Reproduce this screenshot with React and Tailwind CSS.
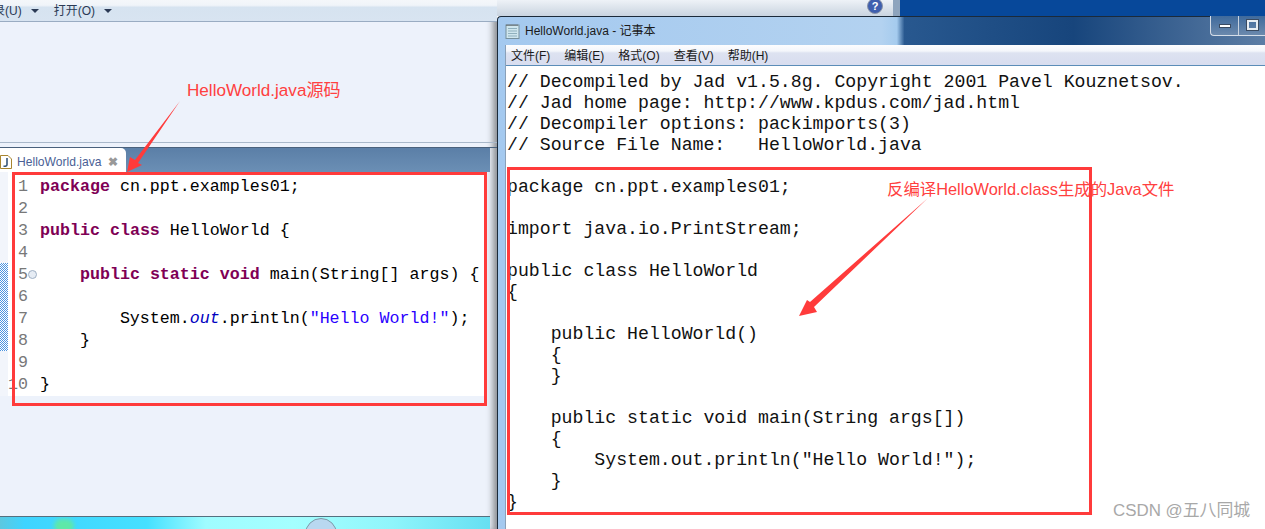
import React from "react";

const editorLines = [
  [["k", "package"], ["t", " cn.ppt.examples01;"]],
  [],
  [["k", "public"], ["t", " "], ["k", "class"], ["t", " HelloWorld {"]],
  [],
  [["t", "    "], ["k", "public"], ["t", " "], ["k", "static"], ["t", " "], ["k", "void"], ["t", " main(String[] args) {"]],
  [],
  [["t", "        System."], ["f", "out"], ["t", ".println("], ["s", '"Hello World!"'], ["t", ");"]],
  [["t", "    }"]],
  [],
  [["t", "}"]],
];

const tokenClass = {
  k: "font-bold text-[#7f0055]",
  t: "text-black",
  f: "italic text-[#0000c0]",
  s: "text-[#2a00ff]",
};

const notepadText = `// Decompiled by Jad v1.5.8g. Copyright 2001 Pavel Kouznetsov.
// Jad home page: http://www.kpdus.com/jad.html
// Decompiler options: packimports(3)
// Source File Name:   HelloWorld.java

package cn.ppt.examples01;

import java.io.PrintStream;

public class HelloWorld
{

    public HelloWorld()
    {
    }

    public static void main(String args[])
    {
        System.out.println("Hello World!");
    }
}`;

const menus = ["文件(F)", "编辑(E)", "格式(O)", "查看(V)", "帮助(H)"];

const Caret = () => (
  <span className="inline-block w-0 h-0 border-x-[4px] border-x-transparent border-t-[4px] border-t-[#2b3a55]" />
);

const JavaIcon = () => (
  <svg width="12" height="14" viewBox="0 0 12 14" className="shrink-0">
    <path d="M0.5 0.5H8L11.5 4V13.5H0.5Z" fill="#fff" stroke="#a8852f" />
    <path d="M7 3V9.5C7 11 5.5 11.5 3.5 11" fill="none" stroke="#35557a" strokeWidth="1.6" />
  </svg>
);

const NotepadIcon = () => (
  <svg width="15" height="16" viewBox="0 0 15 16" className="shrink-0">
    <rect x="1" y="2" width="13" height="13.5" fill="#cfe6ee" stroke="#76909c" />
    <path d="M3 5.5H12M3 8H12M3 10.5H12M3 13H12" stroke="#8fb0bd" />
    <path d="M2 1.5V3M4 1.5V3M6 1.5V3M8 1.5V3M10 1.5V3M12 1.5V3" stroke="#555" />
  </svg>
);

export default function App() {
  return (
    <div className="relative w-[1265px] h-[529px] overflow-hidden flex bg-white font-['Liberation_Sans','Noto_Sans_CJK_SC',sans-serif]">
      {/* Eclipse window behind */}
      <div className="w-[497px] shrink-0 flex flex-col bg-[#edf2fb] shadow-[inset_-7px_0_6px_-3px_rgba(60,60,60,0.55)]">
        <div className="h-[21px] shrink-0 flex items-center gap-[9px] bg-[linear-gradient(#f4f7fa_0,#f0f4f9_25%,#d6e3f0_35%,#d8e4f1_100%)] text-[12px] text-[#2b3a55] overflow-hidden">
          <span className="ml-[-7px]">录(U)</span>
          <Caret />
          <span className="ml-[6px]">打开(O)</span>
          <Caret />
        </div>
        <div className="h-[1px] bg-[#9aacc2]" />
        <div className="h-[121px] shrink-0 border-b border-[#a9b8ca]" />
        <div className="h-[5px] shrink-0 border-b border-[#4a617c]" />
        <div className="h-[24px] shrink-0 flex bg-[linear-gradient(#5b7fa7,#6b8fb5)] mr-[7px]">
          <div className="w-[126px] flex items-center gap-[5px] bg-white rounded-tr-[5px] pt-[4px]">
            <JavaIcon />
            <span className="text-[12.1px] text-[#4a5f95]">HelloWorld.java</span>
            <span className="ml-[2px] text-[12px] font-bold leading-none text-[#999]">✖</span>
          </div>
        </div>
        <div className="h-[224px] shrink-0 flex mr-[13px]">
          <div className="w-[8px] shrink-0 flex flex-col bg-[#f2f5fb]">
            <div className="h-[91px] shrink-0" />
            <div className="h-[88px] bg-[repeating-conic-gradient(#4d94e0_0_25%,#ffffff_0_50%)] bg-[length:2px_2px]" />
          </div>
          <div className="flex-1 bg-white pt-[4px] font-['Liberation_Mono',monospace] text-[16.65px] leading-[22px]">
            {editorLines.map((line, i) => (
              <div key={i} className="flex h-[22px]">
                <span className="relative w-[20px] shrink-0 text-right text-[#787878] whitespace-nowrap flex justify-end">
                  {i + 1}
                  {i === 4 && (
                    <span className="absolute right-[-9px] top-[6px] w-[9px] h-[9px] rounded-full border border-[#9fb0c4] bg-[#e6ecf4]" />
                  )}
                </span>
                <pre className="ml-[12px] font-['Liberation_Mono',monospace]">
                  {line.map(([type, text], j) => (
                    <span key={j} className={tokenClass[type]}>
                      {text}
                    </span>
                  ))}
                </pre>
              </div>
            ))}
          </div>
        </div>
        <div className="flex-1" />
        <div className="h-[13px] shrink-0 relative overflow-hidden border-t border-[#55707f] mr-[7px] bg-[linear-gradient(90deg,#5cc8e0_0,#3fd4ff_5%,#45e0ff_30%,#9ffcff_42%,#a4ffff_60%,#8ff5fb_80%,#66dff2_100%)]">
          <span className="absolute left-[54px] top-[2px] w-[20px] h-[14px] rounded-full bg-[#5fe8a8] blur-[2px]" />
          <span className="absolute left-[305px] top-[1px] w-[32px] h-[32px] rounded-full border border-[#7d9aa8] bg-[#b9d8f0]" />
        </div>
      </div>

      {/* Notepad column */}
      <div className="flex-1 flex flex-col min-w-0">
        <div className="h-[16px] shrink-0 flex">
          <div className="w-[403px] relative bg-[linear-gradient(#eef2f7,#c9d4e0)] border-r-[7px] border-[#8ea4bd]">
            <span className="absolute right-[10px] top-[-2px] w-[16px] h-[16px] rounded-full bg-[#3f5fae] border border-[#8a94a8] text-white text-[11px] font-bold leading-[14px] text-center">
              ?
            </span>
          </div>
          <div className="flex-1 bg-[#07489a]" />
        </div>
        <div className="flex-1 flex flex-col rounded-t-[4px] border-t border-l border-[#1b2a3a] bg-[linear-gradient(90deg,#a4c9ef_0,#b3d2f0_50%,#a5cbee_52%,#28588f_53%,#17457c_75%,#5c7da5_100%)]">
          <div className="relative h-[28px] shrink-0 flex items-center gap-[5px] pl-[7px] text-[12px] text-[#1a1a1a]">
            <NotepadIcon />
            <span>HelloWorld.java - 记事本</span>
            <div className="absolute right-0 top-[-1px] w-[55px] h-[20px] flex rounded-bl-[4px] border-l border-b border-[#d5dde8] bg-[linear-gradient(#3f6a9c,#6b89ad)]">
              <div className="w-[28px] flex items-center justify-center border-r border-[#c8d3e0]">
                <span className="w-[12px] h-[4px] bg-white border border-[#3a4a60]" />
              </div>
              <div className="flex-1 pl-[8px] pt-[4px]">
                <span className="block w-[11px] h-[10px] border-[2px] border-[#e7edf3] outline outline-1 outline-[#3a4a60]" />
              </div>
            </div>
          </div>
          <div className="flex-1 flex flex-col ml-[7px] border-l border-[#8aa0b8]">
            <div className="h-[21px] shrink-0 flex items-center gap-[14px] pl-[5px] pt-[2px] border-b border-[#5b8db8] bg-[linear-gradient(#fdfdfe_0,#f4f6fb_30%,#dde2f1_40%,#d8ddef_100%)] text-[12px] text-[#1a1a1a]">
              {menus.map((m) => (
                <span key={m}>{m}</span>
              ))}
            </div>
            <pre className="flex-1 bg-white pl-[1px] pt-[6px] font-['Liberation_Mono',monospace] text-[18.2px] leading-[21px] text-[#111]">
              {notepadText}
            </pre>
          </div>
        </div>
      </div>

      {/* red annotations */}
      <div className="absolute left-[12px] top-[172px] w-[475px] h-[234px] border-[3px] border-[#ff3b3b]" />
      <div className="absolute left-[507px] top-[167px] w-[585px] h-[348px] border-[3px] border-[#ff3b3b]" />
      <span className="absolute left-[187px] top-[80px] text-[17.1px] leading-[22px] text-[#ff4040]">HelloWorld.java源码</span>
      <span className="absolute left-[887px] top-[179px] text-[16.4px] leading-[20px] text-[#ff4040]">反编译HelloWorld.class生成的Java文件</span>
      <span className="absolute left-[1113px] top-[500px] text-[16.9px] leading-[22px] text-[#a8a8a8]">CSDN @五八同城</span>
      <svg className="absolute left-0 top-0 pointer-events-none" width="1265" height="529">
        <polygon points="180,101 138,163 142,165 127,172 130,157 135,160" fill="#ff3b3b" />
        <polygon points="928,198 814,307 817,312 799,316 807,300 810,302" fill="#ff3b3b" />
      </svg>
    </div>
  );
}
